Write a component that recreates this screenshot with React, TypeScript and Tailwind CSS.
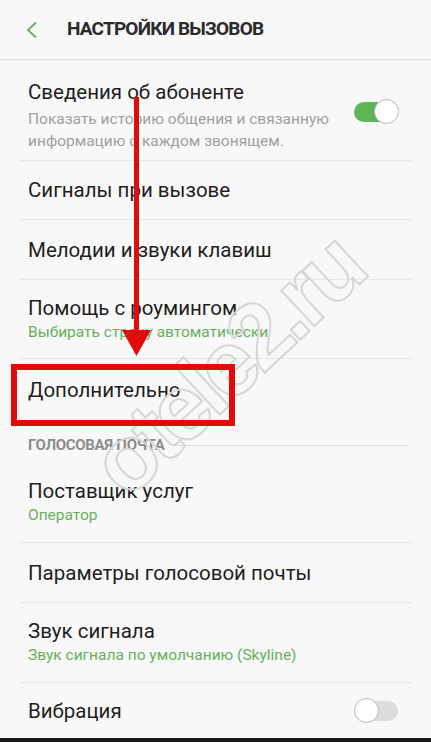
import React from "react";

function Toggle({ on }: { on: boolean }) {
  return (
    <div className="relative w-[45px] h-[26px] flex items-center shrink-0">
      <div
        className={
          "absolute left-0 right-[1px] h-[20px] rounded-full " +
          (on ? "bg-[#5db556]" : "bg-[#dcdcdc]")
        }
      />
      <div
        className={
          "absolute top-0 w-[25px] h-[25px] rounded-full bg-white border border-[#b9b9b9] " +
          (on ? "right-0" : "left-0")
        }
      />
    </div>
  );
}

function Divider() {
  return <div className="mx-[20px] h-px bg-[#e7e7e7]" />;
}

function Row({
  title,
  sub,
  subGreen,
  h,
}: {
  title: string;
  sub?: string;
  subGreen?: boolean;
  h: string;
}) {
  return (
    <div className={"flex flex-col justify-center px-[28px] " + h}>
      <div className="text-[20.5px] leading-[24px] text-[#1e1e1e]">{title}</div>
      {sub && (
        <div
          className={
            "text-[15.5px] leading-[22px] mt-[1px] " +
            (subGreen ? "text-[#68af5d]" : "text-[#a0a0a0]")
          }
        >
          {sub}
        </div>
      )}
    </div>
  );
}

export default function App() {
  return (
    <div
      className="relative w-[431px] h-[742px] overflow-hidden bg-[#f8f8f8]"
      style={{ fontFamily: "Roboto, 'Noto Sans', sans-serif" }}
    >
      {/* Header */}
      <div className="flex items-center h-[60px] border-b border-[#e2e2e2] shadow-[0_1px_1px_rgba(0,0,0,0.04)]">
        <svg width="14" height="18" viewBox="0 0 14 18" className="ml-[25px]">
          <path d="M11 1.5 L3 9 L11 16.5" fill="none" stroke="#68ae62" strokeWidth="1.8" />
        </svg>
        <div className="ml-[28px] text-[19px] font-bold text-[#2b2b2b] tracking-[-0.8px]">
          НАСТРОЙКИ ВЫЗОВОВ
        </div>
      </div>

      {/* Row 1 */}
      <div className="flex items-start h-[100px] px-[28px] pt-[20px]">
        <div className="flex-1">
          <div className="text-[20.5px] leading-[24px] text-[#1e1e1e]">Сведения об абоненте</div>
          <div className="mt-[4px] text-[15.5px] leading-[22px] text-[#a0a0a0]">
            Показать историю общения и связанную
            <br />
            информацию о каждом звонящем.
          </div>
        </div>
        <div className="mt-[19px] mr-[4px]">
          <Toggle on={true} />
        </div>
      </div>
      <Divider />
      <Row title="Сигналы при вызове" h="h-[58px]" />
      <Divider />
      <Row title="Мелодии и звуки клавиш" h="h-[59px]" />
      <Divider />
      <Row title="Помощь с роумингом" sub="Выбирать страну автоматически" subGreen h="h-[78px]" />
      <Divider />
      <Row title="Дополнительно" h="h-[62px]" />

      {/* Section header */}
      <div className="flex items-center h-[42px] pl-[28px] pr-[23px] pt-[6px]">
        <div className="text-[15px] font-bold text-[#8c8c8c] tracking-[-0.3px] whitespace-nowrap">
          ГОЛОСОВАЯ ПОЧТА
        </div>
        <div className="flex-1 h-px bg-[#dcdcdc] ml-[8px]" />
      </div>

      <Row title="Поставщик услуг" sub="Оператор" subGreen h="h-[79px]" />
      <Divider />
      <Row title="Параметры голосовой почты" h="h-[59px]" />
      <Divider />
      <Row title="Звук сигнала" sub="Звук сигнала по умолчанию (Skyline)" subGreen h="h-[79px]" />
      <Divider />
      <div className="flex items-center justify-between h-[55px] pl-[28px] pr-[32px]">
        <div className="text-[20.5px] leading-[24px] text-[#1e1e1e]">Вибрация</div>
        <Toggle on={false} />
      </div>
      <div className="h-[4px] bg-[#1a1a1a]" />

      {/* Watermark */}
      <div
        className="absolute left-[226px] top-[365px] whitespace-nowrap text-[92px] font-bold leading-none tracking-[-6px] text-transparent [-webkit-text-stroke:2px_#d6d6d6]"
        style={{
          transform: "translate(-50%, -50%) rotate(-43deg)",
          fontFamily: "'Liberation Sans', Arial, sans-serif",
        }}
      >
        otele2.ru
      </div>

      {/* Red arrow */}
      <svg className="absolute left-0 top-0" width="431" height="742">
        <rect x="134" y="97" width="5" height="240" fill="#e20a0a" />
        <polygon points="122,330 151,330 136.5,356" fill="#e20a0a" />
      </svg>

      {/* Red box */}
      <div className="absolute left-[11px] top-[364px] w-[224px] h-[62px] border-[6px] border-[#e20a0a]" />
    </div>
  );
}
